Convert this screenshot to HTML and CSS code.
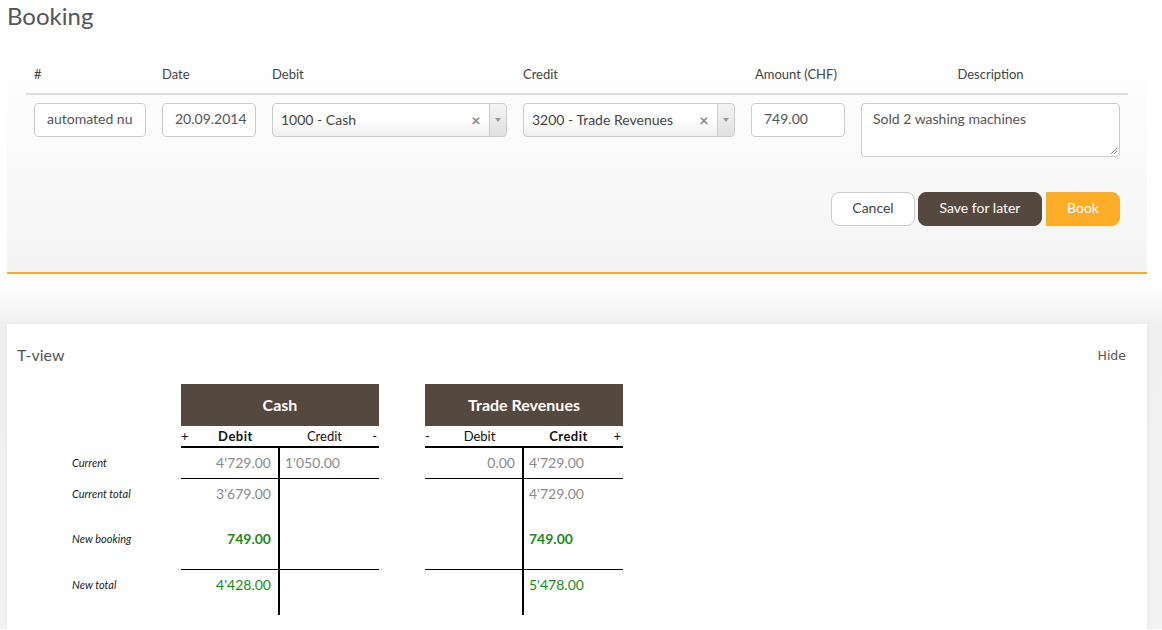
FILE: index.html
```html
<!DOCTYPE html>
<html>
<head>
<meta charset="utf-8">
<link rel="stylesheet" href="styles.css">
</head>
<body>
<div class="page">
  <h1 class="title">Booking</h1>
  <section class="panel">
    <div class="grid head">
      <div class="hc">#</div>
      <div class="hc">Date</div>
      <div class="hc">Debit</div>
      <div class="hc">Credit</div>
      <div class="hc amount">Amount (CHF)</div>
      <div class="hc center">Description</div>
    </div>
    <div class="grid fields">
      <div class="fc"><div class="input">automated nu</div></div>
      <div class="fc"><div class="input">20.09.2014</div></div>
      <div class="fc">
        <div class="select"><span class="sel-text">1000 - Cash</span><span class="sel-x">×</span><span class="sel-arrow"><svg width="8" height="6" viewBox="0 0 8 6"><path d="M1 1h6L4 5z" fill="#999"/></svg></span></div>
      </div>
      <div class="fc">
        <div class="select"><span class="sel-text">3200 - Trade Revenues</span><span class="sel-x">×</span><span class="sel-arrow"><svg width="8" height="6" viewBox="0 0 8 6"><path d="M1 1h6L4 5z" fill="#999"/></svg></span></div>
      </div>
      <div class="fc"><div class="input">749.00</div></div>
      <div class="fc"><div class="textarea">Sold 2 washing machines<svg class="grip" width="8" height="8" viewBox="0 0 8 8"><path d="M7 1L1 7M7 4L4 7" stroke="#888" stroke-width="1"/></svg></div></div>
    </div>
    <div class="actions">
      <button class="btn cancel">Cancel</button>
      <button class="btn save">Save for later</button>
      <button class="btn book">Book</button>
    </div>
  </section>
</div>
<div class="lower">
  <section class="card">
    <div class="card-head">
      <span class="card-title">T-view</span>
      <span class="hide">Hide</span>
    </div>
    <div class="tview">
      <div class="labels">
        <div class="lrow">Current</div>
        <div class="lrow sep">Current total</div>
        <div class="lgap"></div>
        <div class="lrow">New booking</div>
        <div class="lgap sep"></div>
        <div class="lrow">New total</div>
      </div>
      <div class="taccount">
        <div class="t-head">Cash</div>
        <div class="t-sub"><span class="sign">+</span><span class="side strong">Debit</span><span class="side">Credit</span><span class="sign r">-</span></div>
        <div class="t-row line"><div class="dc gray">4'729.00</div><div class="cc gray">1'050.00</div></div>
        <div class="t-row"><div class="dc gray">3'679.00</div><div class="cc"></div></div>
        <div class="t-gap"><div class="dc"></div><div class="cc"></div></div>
        <div class="t-row"><div class="dc green bold">749.00</div><div class="cc"></div></div>
        <div class="t-gap line"><div class="dc"></div><div class="cc"></div></div>
        <div class="t-row"><div class="dc green">4'428.00</div><div class="cc"></div></div>
        <div class="t-gap"><div class="dc"></div><div class="cc"></div></div>
      </div>
      <div class="taccount">
        <div class="t-head">Trade Revenues</div>
        <div class="t-sub"><span class="sign">-</span><span class="side">Debit</span><span class="side strong">Credit</span><span class="sign r">+</span></div>
        <div class="t-row line"><div class="dc gray">0.00</div><div class="cc gray">4'729.00</div></div>
        <div class="t-row"><div class="dc"></div><div class="cc gray">4'729.00</div></div>
        <div class="t-gap"><div class="dc"></div><div class="cc"></div></div>
        <div class="t-row"><div class="dc"></div><div class="cc green bold">749.00</div></div>
        <div class="t-gap line"><div class="dc"></div><div class="cc"></div></div>
        <div class="t-row"><div class="dc"></div><div class="cc green">5'478.00</div></div>
        <div class="t-gap"><div class="dc"></div><div class="cc"></div></div>
      </div>
    </div>
  </section>
</div>
</body>
</html>
```
FILE: styles.css
```css
html, body { margin: 0; padding: 0; background: #fff; }
body { font-family: "Lato", "Open Sans", sans-serif; color: #444; }
.page { width: 1140px; margin-left: 7px; }
.title { margin: 0; padding-top: 2px; height: 50px; font-size: 24px; font-weight: 400; color: #555; line-height: 28px; }
.panel {
  background: linear-gradient(to bottom, #ffffff 0, #f4f4f4 100%);
  border-bottom: 2px solid #f6ab2a;
  padding: 0 19px;
  height: 220px;
}
.grid { display: grid; grid-template-columns: 128px 110px 251px 228px 110px 275px; }
.head { height: 41px; border-bottom: 2px solid #ddd; }
.hc { padding-left: 8px; font-size: 13px; color: #444; line-height: 44px; }
.hc.amount { padding-left: 12px; }
.hc.center { text-align: center; padding-left: 0; }
.fields { padding-top: 8px; height: 89px; }
.fc { padding: 0 8px; }
.input {
  height: 32px; border: 1px solid #ccc; border-radius: 4px; background: #fff;
  font-size: 14px; color: #555; line-height: 30px; padding-left: 12px; white-space: nowrap; overflow: hidden;
}
.select {
  height: 32px; border: 1px solid #ccc; border-radius: 4px;
  background: linear-gradient(to bottom, #fff 0, #fff 50%, #eee 100%);
  display: flex; align-items: center; font-size: 14px; color: #444;
}
.sel-text { flex: 1; padding-left: 8px; white-space: nowrap; padding-bottom: 2px; }
.sel-x { color: #888; font-size: 16px; font-weight: 700; width: 22px; text-align: center; padding-right: 2px; padding-bottom: 1px; }
.sel-arrow {
  width: 16px; height: 32px; border-left: 1px solid #ccc;
  display: flex; align-items: center; justify-content: center;
  background: linear-gradient(to bottom, #f4f4f4, #e0e0e0); border-radius: 0 4px 4px 0;
}
.textarea {
  position: relative; border: 1px solid #ccc; border-radius: 4px; background: #fff;
  font-size: 14px; color: #555; padding: 5px 11px; box-sizing: border-box; height: 54px; line-height: 20px;
}
.grip { position: absolute; right: 1px; bottom: 1px; }
.actions { display: flex; justify-content: flex-end; padding-right: 8px; gap: 3px; }
.btn {
  height: 34px; border-radius: 8px; font-family: "Lato", sans-serif; font-size: 14px;
  border: 1px solid transparent; padding: 0 0 3px; cursor: pointer;
}
.cancel { width: 84px; background: #fff; border-color: #ccc; color: #444; }
.save { width: 124px; background: #55483f; color: #fff; border-color: #55483f; }
.book { width: 74px; margin-left: 1px; background: #fbad27; color: #fff; border-color: #fbad27; border-radius: 0 8px 8px 0; }
.lower {
  background: linear-gradient(to bottom, #ffffff 0, #ffffff 10px, #f0f0f0 50px, #f2f2f2 100%);
  padding-top: 50px; height: 305px;
}
.card { width: 1140px; margin-left: 7px; background: #fff; height: 305px; box-shadow: 0 0 6px rgba(0,0,0,0.04); }
.card-head { display: flex; justify-content: space-between; align-items: center; padding: 18px 21px 0 10px; height: 24px; }
.card-title { font-size: 16px; color: #555; }
.hide { font-family: "DejaVu Sans", sans-serif; font-size: 12.5px; color: #555; padding-top: 2px; }
.tview { display: flex; padding-top: 18px; padding-left: 65px; }
.labels { width: 109px; padding-top: 64px; }
.lrow { height: 30px; line-height: 29px; font-size: 11px; font-style: italic; color: #222; }
.lrow.sep { margin-top: 1px; }
.lgap { height: 15px; }
.lgap.sep { height: 16px; }
.taccount { width: 198px; margin-right: 46px; }
.t-head { height: 42px; background: #55483f; color: #fff; font-weight: 700; font-size: 16px; text-align: center; line-height: 42px; }
.t-sub { display: flex; height: 20px; border-bottom: 2px solid #000; font-size: 13px; color: #111; line-height: 20px; }
.sign { width: 10px; }
.sign.r { text-align: right; padding-right: 2px; width: 8px; }
.side { flex: 1; text-align: center; }
.side.strong { font-weight: 700; letter-spacing: 0.5px; }
.t-row, .t-gap { display: flex; }
.t-row { height: 30px; }
.t-gap { height: 15px; }
.line { border-bottom: 1px solid #000; }
.dc { width: 99px; border-right: 2px solid #000; text-align: right; padding-right: 7px; box-sizing: border-box; }
.cc { flex: 1; padding-left: 5px; }
.t-row .dc, .t-row .cc { font-size: 14px; line-height: 29px; }
.gray { color: #8a8a8a; }
.green { color: #1b8a1b; }
.bold { font-weight: 700; }
```
